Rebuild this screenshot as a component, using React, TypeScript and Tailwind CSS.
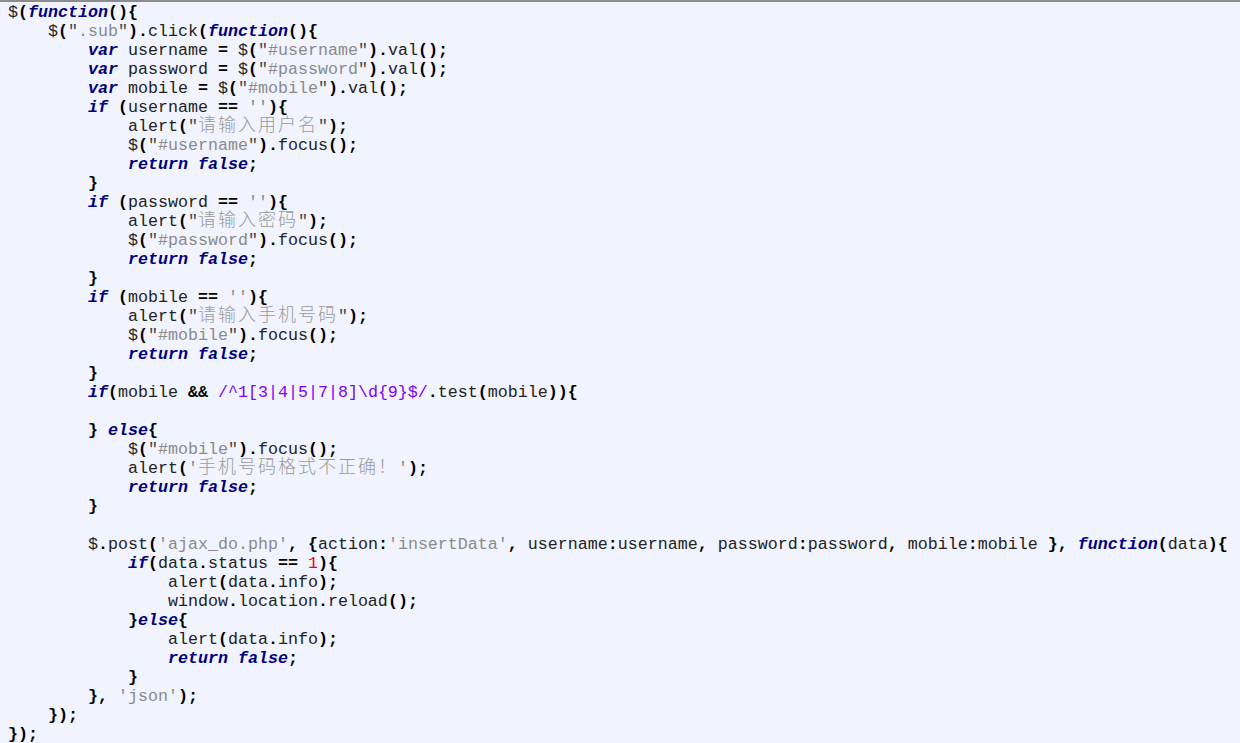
import React from "react";

const CODE = [
  "$(function(){",
  "    $(\".sub\").click(function(){",
  "        var username = $(\"#username\").val();",
  "        var password = $(\"#password\").val();",
  "        var mobile = $(\"#mobile\").val();",
  "        if (username == ''){",
  "            alert(\"请输入用户名\");",
  "            $(\"#username\").focus();",
  "            return false;",
  "        }",
  "        if (password == ''){",
  "            alert(\"请输入密码\");",
  "            $(\"#password\").focus();",
  "            return false;",
  "        }",
  "        if (mobile == ''){",
  "            alert(\"请输入手机号码\");",
  "            $(\"#mobile\").focus();",
  "            return false;",
  "        }",
  "        if(mobile && /^1[3|4|5|7|8]\\d{9}$/.test(mobile)){",
  "",
  "        } else{",
  "            $(\"#mobile\").focus();",
  "            alert('手机号码格式不正确！');",
  "            return false;",
  "        }",
  "",
  "        $.post('ajax_do.php', {action:'insertData', username:username, password:password, mobile:mobile }, function(data){",
  "            if(data.status == 1){",
  "                alert(data.info);",
  "                window.location.reload();",
  "            }else{",
  "                alert(data.info);",
  "                return false;",
  "            }",
  "        }, 'json');",
  "    });",
  "});",
];

type Tok = { t: string; k: string };

const KW = new Set(["function", "var", "if", "return", "false", "else"]);

// tiny highlighter, just enough for this snippet
function tokenize(line: string): Tok[] {
  const out: Tok[] = [];
  let i = 0;
  let last = "";
  while (i < line.length) {
    const c = line[i];
    if (c === " ") {
      let j = i;
      while (j < line.length && line[j] === " ") j++;
      out.push({ t: line.slice(i, j), k: "sp" });
      i = j;
      continue;
    }
    if (c === '"') {
      const j = line.indexOf('"', i + 1);
      out.push({ t: '"', k: "q" });
      out.push({ t: line.slice(i + 1, j), k: "str" });
      out.push({ t: '"', k: "q" });
      i = j + 1;
      last = "str";
      continue;
    }
    if (c === "'") {
      const j = line.indexOf("'", i + 1);
      out.push({ t: line.slice(i, j + 1), k: "str" });
      i = j + 1;
      last = "str";
      continue;
    }
    if (c === "/" && last === "op") {
      let j = i + 1;
      while (j < line.length && line[j] !== "/") {
        if (line[j] === "\\") j++;
        j++;
      }
      out.push({ t: line.slice(i, j + 1), k: "re" });
      i = j + 1;
      last = "re";
      continue;
    }
    if (/[A-Za-z_$]/.test(c)) {
      let j = i;
      while (j < line.length && /[A-Za-z0-9_$]/.test(line[j])) j++;
      const w = line.slice(i, j);
      out.push({ t: w, k: KW.has(w) ? "kw" : "id" });
      i = j;
      last = "id";
      continue;
    }
    if (/[0-9]/.test(c)) {
      let j = i;
      while (j < line.length && /[0-9]/.test(line[j])) j++;
      out.push({ t: line.slice(i, j), k: "num" });
      i = j;
      last = "num";
      continue;
    }
    out.push({ t: c, k: "op" });
    i++;
    last = "op";
  }
  return out;
}

const StrText = ({ text }: { text: string }) => {
  const parts = text.split(/([\u3000-\u9fff\uff00-\uffef]+)/);
  return (
    <>
      {parts.map((p, i) =>
        /[\u3000-\u9fff\uff00-\uffef]/.test(p) ? (
          <span
            key={i}
            className="font-['Noto_Sans_CJK_SC',sans-serif] font-light text-[18px] leading-[0] tracking-[2px] text-[#9a9a9a]"
          >
            {p}
          </span>
        ) : (
          <span key={i}>{p}</span>
        )
      )}
    </>
  );
};

const Token = ({ tok }: { tok: Tok }) => {
  if (tok.k === "kw")
    return <span className="font-bold italic text-[#00007f]">{tok.t}</span>;
  if (tok.k === "str")
    return (
      <span className="text-[#8a8a8a]">
        <StrText text={tok.t} />
      </span>
    );
  if (tok.k === "q") return <span className="text-[#444]">{tok.t}</span>;
  if (tok.k === "re") return <span className="text-[#8000ff]">{tok.t}</span>;
  if (tok.k === "num") return <span className="text-[#ff0000]">{tok.t}</span>;
  if (tok.k === "op") return <span className="font-bold text-black">{tok.t}</span>;
  return <span>{tok.t}</span>;
};

const App = () => {
  return (
    <div className="w-full h-[743px] overflow-hidden bg-[#f1f4fe] border-t-2 border-[#8c8c8c]">
      {/* CODE */}
      <div className="pl-2 pt-px font-['Liberation_Mono','Courier_New',monospace] text-[16.667px] leading-[19px] text-[#222]">
        {CODE.map((line, i) => (
          <div key={i} className="h-[19px] whitespace-pre">
            {tokenize(line).map((tok, j) => (
              <Token key={j} tok={tok} />
            ))}
          </div>
        ))}
      </div>
    </div>
  );
};

export default App;
